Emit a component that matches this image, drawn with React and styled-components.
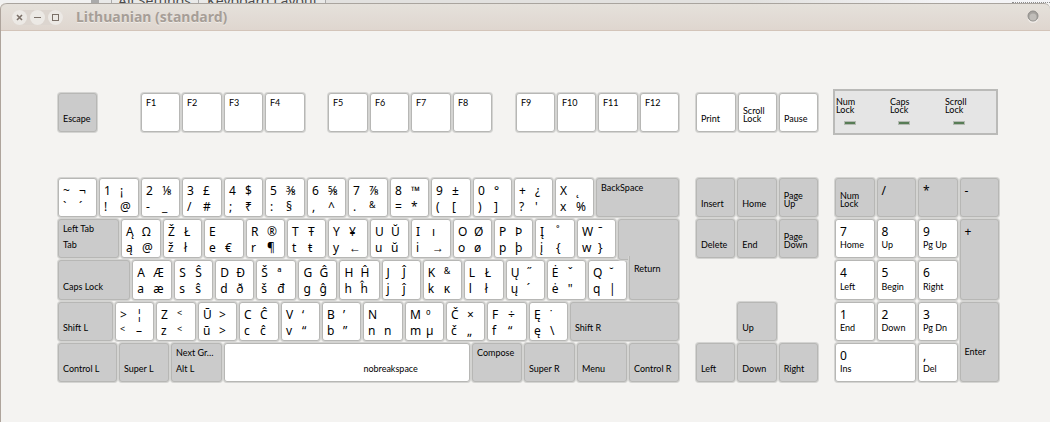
import React from "react";
import styled, { createGlobalStyle, css } from "styled-components";

const GlobalStyle = createGlobalStyle`
  * {
    box-sizing: border-box;
  }
  body {
    margin: 0;
    background: #f4f3f1;
    font-family: "Noto Sans", "Open Sans", sans-serif;
    color: #000;
  }
  button {
    font: inherit;
    color: inherit;
  }
`;

const Backdrop = styled.div`
  display: flex;
  height: 3px;
  padding-left: 91px;
  overflow: hidden;
  background: linear-gradient(to right, #f1f1f1 0 91px, #e9e9e8 91px 325px, #e2e1df 325px 750px, #f4f4f6 950px);
`;
const Divider = styled.div`
  width: ${(props) => props.$width}px;
  margin-right: ${(props) => props.$after || 0}px;
  background: #aaa;
`;
const Crumb = styled.span`
  padding: 0 7px 0 6px;
  font-size: 14px;
  line-height: 1px;
  color: #4c4c4c;
  white-space: nowrap;
`;
const Dots = styled.div`
  width: 38px;
  height: 3px;
  margin-left: auto;
  border-bottom: 1px dotted #8d8d8d;
`;

const Window = styled.div`
  min-height: calc(100vh - 3px);
  border-left: 1px solid #aea49c;
  border-radius: 6px 6px 0 0;
  background: #f4f3f1;
`;
const TitleBar = styled.header`
  display: flex;
  align-items: center;
  height: 28px;
  padding: 0 11px;
  border-top: 1px solid #a9a49e;
  border-bottom: 1px solid #d3c4b9;
  border-radius: 6px 6px 0 0;
  background: linear-gradient(#e5e1db, #dfd6cf);
`;
const Controls = styled.div`
  display: flex;
  gap: 3px;
  margin-right: 13px;
  border-radius: 8px;
  background: #dcd5cf;
`;
const Control = styled.button`
  display: flex;
  width: 15px;
  height: 15px;
  padding: 0;
  border: 0;
  border-radius: 50%;
  background: #ece9e5;
`;
const Title = styled.h1`
  flex: 1;
  margin: 0;
  font-size: 14px;
  font-weight: 700;
  line-height: 20px;
  color: #a69e97;
  text-shadow: 0 1px 0 #efebe7;
`;

const Board = styled.main`
  display: grid;
  grid-template-columns: 621fr 122fr 164fr;
  gap: 46px 17px;
  padding: 62px 51px 40px 57px;
`;
const Section = styled.div`
  display: flex;
  flex-direction: column;
  gap: 2px;
`;
const Row = styled.div`
  display: grid;
  grid-template-columns: ${(props) => props.$columns};
  gap: 2px;
  height: ${(props) => props.$height || 39}px;
`;

const ring = css`
  border: 1px solid #b7b7b5;
  border-radius: 3px;
  box-shadow: 0 0 0 1px #d4d4d2;
`;
const KeyCap = styled.button`
  display: flex;
  flex-direction: column;
  min-width: 0;
  padding: ${(props) => (props.$tall ? "44px 0 0 4px" : "4px 0 0 4px")};
  text-align: left;
  background: ${(props) => (props.$dark ? "#cbcbcb" : "#fff")};
  ${ring}
`;
const Legends = styled.span`
  display: grid;
  grid-template-columns: 16px 16px;
  grid-auto-rows: 16px;
  font-size: 12px;
  line-height: 16px;
  white-space: pre;
`;
const Raised = styled.span`
  font-size: 9px;
  line-height: 12px;
`;
const Caption = styled.span`
  display: block;
  font-family: Lato, "Noto Sans", sans-serif;
  font-size: 9px;
  line-height: 8px;
  white-space: pre;
`;
const TopCaption = styled(Caption)`
  margin-top: 1px;
`;
const BottomCaption = styled(Caption)`
  margin-top: auto;
  margin-bottom: 8px;
  margin-left: ${(props) => (props.$shifted ? "56%" : 0)};
`;

// the two alphabetic rows share the L-shaped return key on their right
const HomeBlock = styled.div`
  display: grid;
  grid-template-columns: 560fr 11fr 50fr;
  grid-template-rows: 39px 40px;
  row-gap: 2px;
`;
const UpperRow = styled(Row)`
  grid-area: 1 / 1 / 2 / 2;
  padding-right: 2px;
`;
const LowerRow = styled(Row)`
  grid-area: 2 / 1 / 3 / 3;
  padding-right: 2px;
`;
const ReturnKey = styled.button`
  position: relative;
  display: flex;
  grid-area: 1 / 2 / 3 / 4;
  padding: 46px 0 0 16px;
  border: 0;
  background: none;
  text-align: left;
  &::before,
  &::after {
    content: "";
    position: absolute;
    right: 0;
    background: #cbcbcb;
    ${ring}
  }
  &::before {
    top: 0;
    left: 0;
    height: 39px;
  }
  &::after {
    top: 37px;
    bottom: 0;
    left: 18%;
    border-top: 0;
    border-radius: 0 0 3px 3px;
    clip-path: inset(0 -1px -1px -1px);
  }
  ${Caption} {
    position: relative;
    z-index: 1;
  }
`;

const Pad = styled.div`
  display: grid;
  grid-template-columns: repeat(${(props) => props.$columns}, 1fr);
  grid-template-rows: 39px 39px 40px 39px 39px;
  gap: 2px;
`;
const PadKey = styled(KeyCap)`
  grid-area: ${(props) => props.$area};
`;

const Indicators = styled.div`
  display: grid;
  grid-template-columns: 54fr 55fr 51fr;
  margin: -4px 1px -3px -2px;
  padding: 7px 0 0 1px;
  border: 2px solid #babab8;
  background: #e5e5e5;
`;
const Led = styled.div`
  width: 12px;
  height: 4px;
  margin: 7px 0 0 8px;
  border: 1px solid #b5bab3;
  background: #587d56;
`;

const functionRow = [
  { size: 39, bottom: "Escape", dark: true },
  { size: 40, empty: true },
  { size: 39, top: "F1" },
  { size: 40, top: "F2" },
  { size: 39, top: "F3" },
  { size: 40, top: "F4" },
  { size: 19, empty: true },
  { size: 40, top: "F5" },
  { size: 39, top: "F6" },
  { size: 40, top: "F7" },
  { size: 39, top: "F8" },
  { size: 20, empty: true },
  { size: 39, top: "F9" },
  { size: 39, top: "F10" },
  { size: 40, top: "F11" },
  { size: 39, top: "F12" },
];

// legends read: shift, shift+level3, plain, level3
const numberRow = [
  { size: 39, legends: ["~", "¬", "`", "´"] },
  { size: 40, legends: ["1", "¡", "!", "@"] },
  { size: 39, legends: ["2", "⅛", "-", "_"] },
  { size: 40, legends: ["3", "£", "/", "#"] },
  { size: 39, legends: ["4", "$", ";", "₹"] },
  { size: 40, legends: ["5", "⅜", ":", "§"] },
  { size: 39, legends: ["6", "⅝", ",", "^"] },
  { size: 40, legends: ["7", "⅞", ".", "&"] },
  { size: 39, legends: ["8", "™", "=", "*"] },
  { size: 40, legends: ["9", "±", "(", "["] },
  { size: 39, legends: ["0", "°", ")", "]"] },
  { size: 39, legends: ["+", "¿", "?", "'"] },
  { size: 39, legends: ["X", "˛", "x", "%"] },
  { size: 83, top: "BackSpace", dark: true },
];
const upperRow = [
  { size: 61, top: "Left Tab", bottom: "Tab", dark: true },
  { size: 40, legends: ["Ą", "Ω", "ą", "@"] },
  { size: 39, legends: ["Ž", "Ł", "ž", "ł"] },
  { size: 40, legends: ["E", " ", "e", "€"] },
  { size: 39, legends: ["R", "®", "r", "¶"] },
  { size: 39, legends: ["T", "Ŧ", "t", "ŧ"] },
  { size: 40, legends: ["Y", "¥", "y", "←"] },
  { size: 39, legends: ["U", "Ŭ", "u", "ŭ"] },
  { size: 40, legends: ["I", "ı", "i", "→"] },
  { size: 39, legends: ["O", "Ø", "o", "ø"] },
  { size: 39, legends: ["P", "Þ", "p", "þ"] },
  { size: 40, legends: ["Į", "˚", "į", "{"] },
  { size: 39, legends: ["W", "ˉ", "w", "}"] },
];
const lowerRow = [
  { size: 72, bottom: "Caps Lock", dark: true },
  { size: 40, legends: ["A", "Æ", "a", "æ"] },
  { size: 39, legends: ["S", "Ŝ", "s", "ŝ"] },
  { size: 39, legends: ["D", "Đ", "d", "ð"] },
  { size: 40, legends: ["Š", "ª", "š", "đ"] },
  { size: 39, legends: ["G", "Ĝ", "g", "ĝ"] },
  { size: 40, legends: ["H", "Ĥ", "h", "ĥ"] },
  { size: 39, legends: ["J", "Ĵ", "j", "ĵ"] },
  { size: 39, legends: ["K", "&", "k", "ĸ"] },
  { size: 40, legends: ["L", "Ł", "l", "ł"] },
  { size: 39, legends: ["Ų", "˝", "ų", "´"] },
  { size: 39, legends: ["Ė", "ˇ", "ė", '"'] },
  { size: 39, legends: ["Q", "˘", "q", "|"] },
];
const shiftRow = [
  { size: 55, bottom: "Shift L", dark: true },
  { size: 39, legends: [">", "¦", "<", "–"] },
  { size: 40, legends: ["Z", "<", "z", "<"] },
  { size: 39, legends: ["Ū", ">", "ū", ">"] },
  { size: 40, legends: ["C", "Ĉ", "c", "ĉ"] },
  { size: 39, legends: ["V", "‘", "v", "“"] },
  { size: 39, legends: ["B", "’", "b", "”"] },
  { size: 40, legends: ["N", " ", "n", "n"] },
  { size: 39, legends: ["M", "º", "m", "µ"] },
  { size: 39, legends: ["Č", "×", "č", "„"] },
  { size: 40, legends: ["F", "÷", "f", "“"] },
  { size: 39, legends: ["Ę", "˙", "ę", "\\"] },
  { size: 109, bottom: "Shift R", dark: true },
];
const bottomRow = [
  { size: 59, bottom: "Control L", dark: true },
  { size: 50, bottom: "Super L", dark: true },
  { size: 51, top: "Next Gr…", bottom: "Alt L", dark: true },
  { size: 246, bottom: "nobreakspace", shifted: true },
  { size: 50, top: "Compose", dark: true },
  { size: 51, bottom: "Super R", dark: true },
  { size: 50, bottom: "Menu", dark: true },
  { size: 50, bottom: "Control R", dark: true },
];
const printRow = [
  { size: 40, bottom: "Print" },
  { size: 39, bottom: "Scroll\nLock" },
  { size: 39, bottom: "Pause" },
];
const navPad = [
  { area: "1 / 1", bottom: "Insert", dark: true },
  { area: "1 / 2", bottom: "Home", dark: true },
  { area: "1 / 3", bottom: "Page\nUp", dark: true },
  { area: "2 / 1", bottom: "Delete", dark: true },
  { area: "2 / 2", bottom: "End", dark: true },
  { area: "2 / 3", bottom: "Page\nDown", dark: true },
  { area: "4 / 2", bottom: "Up", dark: true },
  { area: "5 / 1", bottom: "Left", dark: true },
  { area: "5 / 2", bottom: "Down", dark: true },
  { area: "5 / 3", bottom: "Right", dark: true },
];
const numPad = [
  { area: "1 / 1", bottom: "Num\nLock", dark: true },
  { area: "1 / 2", legends: ["/"], dark: true },
  { area: "1 / 3", legends: ["*"], dark: true },
  { area: "1 / 4", legends: ["-"], dark: true },
  { area: "2 / 1", legends: ["7"], bottom: "Home" },
  { area: "2 / 2", legends: ["8"], bottom: "Up" },
  { area: "2 / 3", legends: ["9"], bottom: "Pg Up" },
  { area: "2 / 4 / 4 / 5", legends: ["+"], dark: true },
  { area: "3 / 1", legends: ["4"], bottom: "Left" },
  { area: "3 / 2", legends: ["5"], bottom: "Begin" },
  { area: "3 / 3", legends: ["6"], bottom: "Right" },
  { area: "4 / 1", legends: ["1"], bottom: "End" },
  { area: "4 / 2", legends: ["2"], bottom: "Down" },
  { area: "4 / 3", legends: ["3"], bottom: "Pg Dn" },
  { area: "4 / 4 / 6 / 5", top: "Enter", tall: true, dark: true },
  { area: "5 / 1 / 6 / 3", legends: ["0"], bottom: "Ins" },
  { area: "5 / 3", legends: [","], bottom: "Del" },
];

const columns = (items) => items.map((item) => `${item.size}fr`).join(" ");

const Key = ({ item }) => {
  const Cap = item.area ? PadKey : KeyCap;
  return (
    <Cap
      type="button"
      $area={item.area}
      $dark={item.dark}
      $tall={item.tall}
    >
      {item.legends && (
        <Legends>
          {item.legends.map((legend, i) =>
            legend === "&" || legend === "<" ? (
              <Raised key={i}>{legend}</Raised>
            ) : (
              <span key={i}>{legend}</span>
            )
          )}
        </Legends>
      )}
      {item.top && <TopCaption>{item.top}</TopCaption>}
      {item.bottom && (
        <BottomCaption $shifted={item.shifted}>{item.bottom}</BottomCaption>
      )}
    </Cap>
  );
};

const Keys = ({ items }) =>
  items.map((item, i) =>
    item.empty ? <div key={i} /> : <Key key={i} item={item} />
  );

const App = () => {
  return (
    <>
      <GlobalStyle />
      <Backdrop>
        <Divider $width={8} $after={12} />
        <Divider $width={1} />
        <Crumb>All Settings</Crumb>
        <Divider $width={1} $after={2} />
        <Crumb>Keyboard Layout</Crumb>
        <Divider $width={1} />
        <Dots />
      </Backdrop>
      <Window>
        <TitleBar>
          <Controls>
            <Control type="button" aria-label="Close">
              <svg width="15" height="15" stroke="#7b7068" strokeWidth="1.6">
                <path d="M5 5l5 5M10 5l-5 5" />
              </svg>
            </Control>
            <Control type="button" aria-label="Minimize">
              <svg width="15" height="15" stroke="#7b7068">
                <path d="M4 7.5h7" />
              </svg>
            </Control>
            <Control type="button" aria-label="Maximize">
              <svg width="15" height="15" stroke="#7b7068" fill="none">
                <rect x="4.5" y="4.5" width="6" height="6" />
              </svg>
            </Control>
          </Controls>
          <Title>Lithuanian (standard)</Title>
          <svg width="12" height="14">
            <circle cx="6" cy="7.5" r="5.5" fill="#eeeae6" />
            <circle cx="6" cy="6" r="5" fill="#a5a29e" stroke="#8e8c89" />
            <circle cx="6" cy="7" r="3.5" fill="#c0bdb9" />
          </svg>
        </TitleBar>
        <Board>
          <Row $columns={columns(functionRow)}>
            <Keys items={functionRow} />
          </Row>
          <Row $columns={columns(printRow)}>
            <Keys items={printRow} />
          </Row>
          <Indicators>
            {["Num\nLock", "Caps\nLock", "Scroll\nLock"].map((name) => (
              <div key={name}>
                <Caption>{name}</Caption>
                <Led />
              </div>
            ))}
          </Indicators>
          <Section>
            <Row $columns={columns(numberRow)}>
              <Keys items={numberRow} />
            </Row>
            <HomeBlock>
              <UpperRow $columns={columns(upperRow)}>
                <Keys items={upperRow} />
              </UpperRow>
              <LowerRow $columns={columns(lowerRow)} $height={40}>
                <Keys items={lowerRow} />
              </LowerRow>
              <ReturnKey type="button">
                <Caption>Return</Caption>
              </ReturnKey>
            </HomeBlock>
            <Row $columns={columns(shiftRow)}>
              <Keys items={shiftRow} />
            </Row>
            <Row $columns={columns(bottomRow)}>
              <Keys items={bottomRow} />
            </Row>
          </Section>
          <Pad $columns={3}>
            <Keys items={navPad} />
          </Pad>
          <Pad $columns={4}>
            <Keys items={numPad} />
          </Pad>
        </Board>
      </Window>
    </>
  );
};

export default App;
